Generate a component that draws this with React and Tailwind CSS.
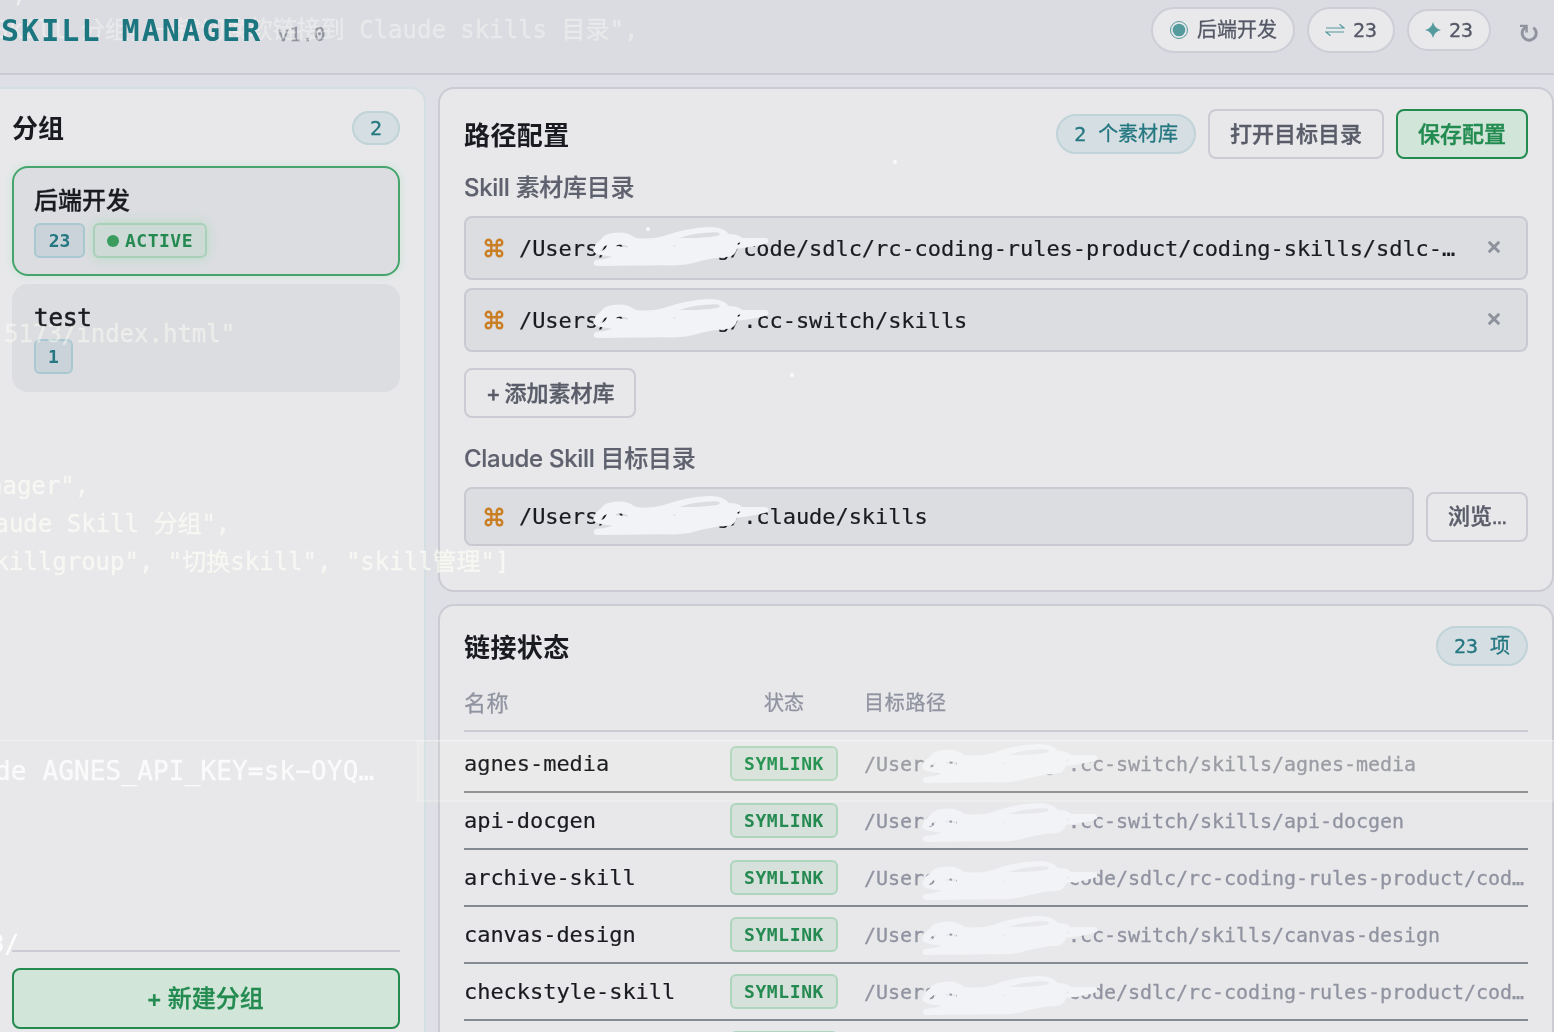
import React from "react";
import { Command } from "lucide-react";

const HIDDEN = "n       g/";

const libraries = [
  `/Users/${HIDDEN}code/sdlc/rc-coding-rules-product/coding-skills/sdlc-…`,
  `/Users/${HIDDEN}.cc-switch/skills`,
];

const links = [
  { name: "agnes-media", path: ".cc-switch/skills/agnes-media", mask: "top-[7px]" },
  { name: "api-docgen", path: ".cc-switch/skills/api-docgen", mask: "top-[9px]" },
  { name: "archive-skill", path: "code/sdlc/rc-coding-rules-product/cod…", mask: "top-[10px]" },
  { name: "canvas-design", path: ".cc-switch/skills/canvas-design", mask: "top-[8px]" },
  { name: "checkstyle-skill", path: "code/sdlc/rc-coding-rules-product/cod…", mask: "top-[11px]" },
  { name: "code-review", path: ".cc-switch/skills/code-review", mask: "top-[10px]" },
];

const mono = "font-['DejaVu_Sans_Mono','Noto_Sans_CJK_SC',monospace]";

const Scribble = ({ className }) => (
  <svg
    className={`absolute w-[177px] h-[40px] pointer-events-none ${className}`}
    viewBox="0 0 531 120"
    fill="#f2f3f6"
    fillRule="evenodd"
  >
    <path d="M10 102Q36 102 62 92L30 88Q0 82 4 70Q10 52 25 42Q35 22 70 20Q105 16 130 35Q175 42 215 30Q290 4 350 3Q395 2 410 24Q440 24 450 36L520 36Q532 38 528 50Q500 62 435 68Q430 88 410 92Q350 95 300 112Q270 120 220 118L14 120Q-2 116 10 102ZM262 36Q310 20 370 19Q392 21 378 29Q330 38 262 36ZM24 76Q30 62 46 58Q42 72 24 76ZM74 58Q90 52 108 60L106 65Q90 60 74 62ZM244 59L250 58L250 62L244 62ZM434 54Q440 48 446 50L440 56Z" />
  </svg>
);

const CountPill = ({ children, className = "" }) => (
  <span
    className={`flex items-center justify-center px-4 rounded-full border-2 border-[#bfd3d9] bg-[#d5dee2] text-[#257781] text-[20px] tracking-[-0.04px] [-webkit-text-stroke:0.3px] ${mono} ${className}`}
  >
    {children}
  </span>
);

const StatPill = ({ icon, children, className = "" }) => (
  <span
    className={`flex items-center rounded-full border-2 border-[#cdced6] bg-[#e9e9ec] text-[#555966] text-[20px] [-webkit-text-stroke:0.3px] ${mono} ${className}`}
  >
    {icon}
    {children}
  </span>
);

const Button = ({ children, primary, className = "" }) => (
  <button
    className={`h-[50px] px-5 rounded-lg border-2 text-[22px] font-medium whitespace-nowrap [-webkit-text-stroke:0.4px] ${
      primary
        ? "border-[#238b50] bg-[#d1e5d9] text-[#238b50]"
        : "border-[#cacbd3] text-[#5a5d69]"
    } ${className}`}
  >
    {children}
  </button>
);

const PathBox = ({ path, removable, className = "" }) => (
  <div
    className={`relative flex items-center rounded-lg border-2 border-[#c9cad1] bg-[#dcdde1] pl-[17px] pr-[26px] ${className}`}
  >
    <Command size={22} strokeWidth={2.6} className="text-[#cb7f25] shrink-0" />
    <span className={`ml-[14px] flex-1 whitespace-pre text-[22px] tracking-[-0.06px] text-[#191b21] [-webkit-text-stroke:0.2px] ${mono}`}>
      {path}
    </span>
    {removable && (
      <svg width="12" height="12" viewBox="0 0 12 12" stroke="#8d919c" strokeWidth="3" strokeLinecap="round" className="shrink-0 -mt-[3px]">
        <path d="M1.7 1.7L10.3 10.3M10.3 1.7L1.7 10.3" />
      </svg>
    )}
    <Scribble className={removable ? "left-[126px] top-[8px]" : "left-[126px] top-[6px]"} />
  </div>
);

const Header = () => (
  <header className="h-[75px] shrink-0 flex justify-between bg-[#dbdce1] border-b-2 border-[#c9cad2] pl-px pr-[15px]">
    <div className={`flex items-baseline pt-[13px] ${mono}`}>
      <h1 className="relative z-10 text-[30px] leading-[36px] font-bold tracking-[2.04px] text-[#1b7680]">
        SKILL MANAGER
      </h1>
      <span className="ml-[15px] text-[20px] text-[#8f929d] [-webkit-text-stroke:0.3px]">v1.0</span>
    </div>

    <div className="flex items-center gap-3 h-[60px]">
      <StatPill
        className="h-[46px] w-[144px] pl-[16px]"
        icon={
          <svg width="20" height="20" viewBox="0 0 20 20" className="mr-[8px]">
            <circle cx="10" cy="10" r="8.5" fill="none" stroke="#559a9d" strokeWidth="1" />
            <circle cx="10" cy="10" r="6.3" fill="#559a9d" />
          </svg>
        }
      >
        后端开发
      </StatPill>
      <StatPill
        className="h-[46px] w-[88px] pl-[16px]"
        icon={
          <svg width="20" height="14" viewBox="0 0 20 14" fill="none" stroke="#559a9d" strokeWidth="1.2" className="mr-[8px]">
            <path d="M1 5H19L14.5 1.3M19 9H1L5.5 12.7" />
          </svg>
        }
      >
        23
      </StatPill>
      <StatPill
        className="h-[42px] w-[84px] pl-[16px]"
        icon={
          <svg width="16" height="16" viewBox="0 0 16 16" fill="#559a9d" className="mr-[8px]">
            <path d="M8 0Q9.5 6.5 16 8Q9.5 9.5 8 16Q6.5 9.5 0 8Q6.5 6.5 8 0Z" />
          </svg>
        }
      >
        23
      </StatPill>
      <button className="ml-[16px] mt-[5px]">
        <svg width="20" height="20" viewBox="0 0 20 20" fill="none" stroke="#9194a0" strokeWidth="3">
          <path d="M14.4 4.6A7 7 0 1 1 4.2 6.6L6.5 4" />
          <path d="M1 2.9H7.6V9.5" strokeWidth="2.4" />
        </svg>
      </button>
    </div>
  </header>
);

const Sidebar = () => (
  <aside className="w-[426px] shrink-0 flex flex-col border-t-2 border-r-2 border-[#d3dfe3] rounded-tr-2xl bg-[#e8e8eb] pl-3 pr-6 pt-[22px]">
    <div className="flex items-center justify-between h-[34px]">
      <h2 className="text-[26px] font-bold text-[#1a1b21]">分组</h2>
      <CountPill className="h-[34px] w-12">2</CountPill>
    </div>

    <div className="mt-[21px] h-[110px] rounded-2xl border-2 border-[#45a56d] bg-[#dcdde1] px-5 pt-[15px] shadow-[0_0_10px_rgba(90,220,130,0.2)]">
      <div className="h-[36px] leading-[36px] text-[24px] font-medium text-[#1a1b21] [-webkit-text-stroke:0.3px]">后端开发</div>
      <div className={`mt-1 flex gap-2 text-[18px] font-bold ${mono}`}>
        <span className="w-[51px] h-[35px] flex items-center justify-center rounded-md border-2 border-[#a9c8d1] bg-[#cbd3da] text-[#257781]">
          23
        </span>
        <span className="w-[114px] h-[35px] flex items-center justify-center rounded-md border-2 border-[#a9d1b9] bg-[#cddad6] text-[#258a51] tracking-[0.5px] shadow-[0_0_12px_rgba(90,220,130,0.3)]">
          <i className="w-3 h-3 mr-[6px] rounded-full bg-[#3a9c5d]" />
          ACTIVE
        </span>
      </div>
    </div>

    <div className="mt-2 h-[108px] rounded-2xl bg-[#dcdde1] px-[22px] pt-[16px]">
      <div className={`h-[36px] leading-[36px] text-[24px] text-[#1a1b21] [-webkit-text-stroke:0.6px] ${mono}`}>test</div>
      <span className={`mt-[3px] w-[39px] h-[35px] flex items-center justify-center rounded-md border-2 border-[#a9c8d1] bg-[#cbd3da] text-[#257781] text-[18px] font-bold ${mono}`}>
        1
      </span>
    </div>

    <div className="mt-auto mb-[3px] pt-4 border-t-2 border-[#cacbd3]">
      <button className="w-full h-[61px] pr-[2px] rounded-lg border-2 border-[#238b50] bg-[#d1e5d9] text-[#238b50] text-[24px] font-medium [word-spacing:-1px] [-webkit-text-stroke:0.3px]">
        + 新建分组
      </button>
    </div>
  </aside>
);

const PathConfig = () => (
  <section className="h-[505px] shrink-0 rounded-2xl border-2 border-[#cacbd3] bg-[#e8e8eb] px-6 pt-5">
    <div className="flex items-center gap-3 h-[50px]">
      <h2 className="mr-auto pt-[2px] text-[26px] font-bold tracking-[0.4px] text-[#1a1b21]">路径配置</h2>
      <CountPill className="h-10 whitespace-pre">2 个素材库</CountPill>
      <Button>打开目标目录</Button>
      <Button primary>保存配置</Button>
    </div>

    <h3 className="mt-[11px] h-[36px] leading-[36px] text-[24px] font-medium tracking-[-0.3px] text-[#5f626e] [-webkit-text-stroke:0.2px]">
      Skill 素材库目录
    </h3>
    <div className="mt-[10px] flex flex-col gap-2">
      {libraries.map((path) => (
        <PathBox key={path} path={path} removable className="h-16" />
      ))}
    </div>
    <Button className="mt-4 w-[172px] px-0 [word-spacing:-2px]">+ 添加素材库</Button>

    <h3 className="mt-[23px] h-[36px] leading-[36px] text-[24px] font-medium tracking-[-0.3px] text-[#5f626e] [-webkit-text-stroke:0.2px]">
      Claude Skill 目标目录
    </h3>
    <div className="mt-[10px] flex items-center gap-3">
      <PathBox path={`/Users/${HIDDEN}.claude/skills`} className="h-[59px] flex-1" />
      <Button className="w-[102px]">
        浏览<span className="font-['Liberation_Sans',sans-serif] text-[15px] font-bold">…</span>
      </Button>
    </div>
  </section>
);

const LinkStatus = () => (
  <section className="flex-1 min-h-0 overflow-hidden rounded-t-2xl border-2 border-b-0 border-[#cacbd3] bg-[#e8e8eb] px-6 pt-5">
    <div className="flex items-center justify-between h-10">
      <h2 className="pt-[2px] text-[26px] font-bold tracking-[0.4px] text-[#1a1b21]">链接状态</h2>
      <CountPill className="h-10 whitespace-pre">23 项</CountPill>
    </div>

    <div className="mt-[10px] mb-1 h-[56px] grid grid-cols-[240px_160px_1fr] items-center border-b-2 border-[#cacbd3] text-[20px] text-[#9093a0] [-webkit-text-stroke:0.3px]">
      <span className="text-[22px] tracking-[0.5px]">名称</span>
      <span className="text-center">状态</span>
      <span className="tracking-[0.7px]">目标路径</span>
    </div>

    {links.map((link) => (
      <div
        key={link.name}
        className={`relative h-[57px] grid grid-cols-[240px_160px_1fr] items-center border-b-2 border-[#858991] ${mono}`}
      >
        <span className="text-[22px] tracking-[-0.045px] text-[#1a1b21] whitespace-nowrap [-webkit-text-stroke:0.2px]">
          {link.name}
        </span>
        <span className="justify-self-center w-[108px] h-[35px] flex items-center justify-center rounded-md border-2 border-[#aed5bd] bg-[#d5e1da] text-[#258a51] text-[18px] font-bold tracking-[0.6px]">
          SYMLINK
        </span>
        <span className="text-[20px] tracking-[-0.04px] text-[#9093a0] whitespace-pre [-webkit-text-stroke:0.3px]">
          {`/Users/${HIDDEN}${link.path}`}
        </span>
        <Scribble className={`left-[457px] ${link.mask}`} />
      </div>
    ))}
  </section>
);

// faint editor text showing through the translucent window
const Backdrop = () => (
  <div
    className={`absolute inset-0 overflow-hidden pointer-events-none mix-blend-overlay whitespace-pre text-[24px] leading-[36px] text-[#fcffcc]/65 [-webkit-text-stroke:0.3px] ${mono}`}
  >
    <span className="absolute left-[-6px] top-[12px] text-[#fafce8]/35">Skill 分组，一键切换软链接到 Claude skills 目录",</span>
    <span className="absolute left-[12px] top-[-24px] text-[#fafce8]/50">,</span>
    <span className="absolute left-[4px] top-[316px] text-[#fcffd8]/45">5173/index.html"</span>
    <span className="absolute left-[-12px] top-[468px]">nager",</span>
    <span className="absolute left-[-20px] top-[506px]">laude Skill 分组",</span>
    <span className="absolute left-[-20px] top-[544px]">skillgroup", "切换skill", "skill管理"]</span>
    <div className="absolute inset-x-0 top-[740px] h-px bg-white/30" />
    <div className="absolute left-[417px] right-0 top-[740px] h-[62px] border-2 border-white/15 bg-[#f4f4b0]/10" />
    <span className="absolute left-[-5px] top-[753px] text-[26px] tracking-[0.15px] text-white/80">de AGNES_API_KEY=sk−OYQ…</span>
    <span className="absolute left-[-10px] top-[926px] text-white/90">3/</span>
    <i className="absolute left-[893px] top-[160px] w-1 h-1 rounded-full bg-white/80" />
    <i className="absolute left-[646px] top-[227px] w-1 h-1 rounded-full bg-white/80" />
    <i className="absolute left-[790px] top-[373px] w-1 h-1 rounded-full bg-white/80" />
  </div>
);

const App = () => (
  <div className="relative w-[1554px] h-[1032px] overflow-hidden flex flex-col bg-[#dfe0e5] font-[Inter,'Noto_Sans_CJK_SC',sans-serif]">
    <Header />
    <div className="flex-1 min-h-0 flex gap-3 pt-3">
      <Sidebar />
      <main className="flex-1 min-w-0 flex flex-col gap-3">
        <PathConfig />
        <LinkStatus />
      </main>
    </div>
    <Backdrop />
  </div>
);

export default App;
